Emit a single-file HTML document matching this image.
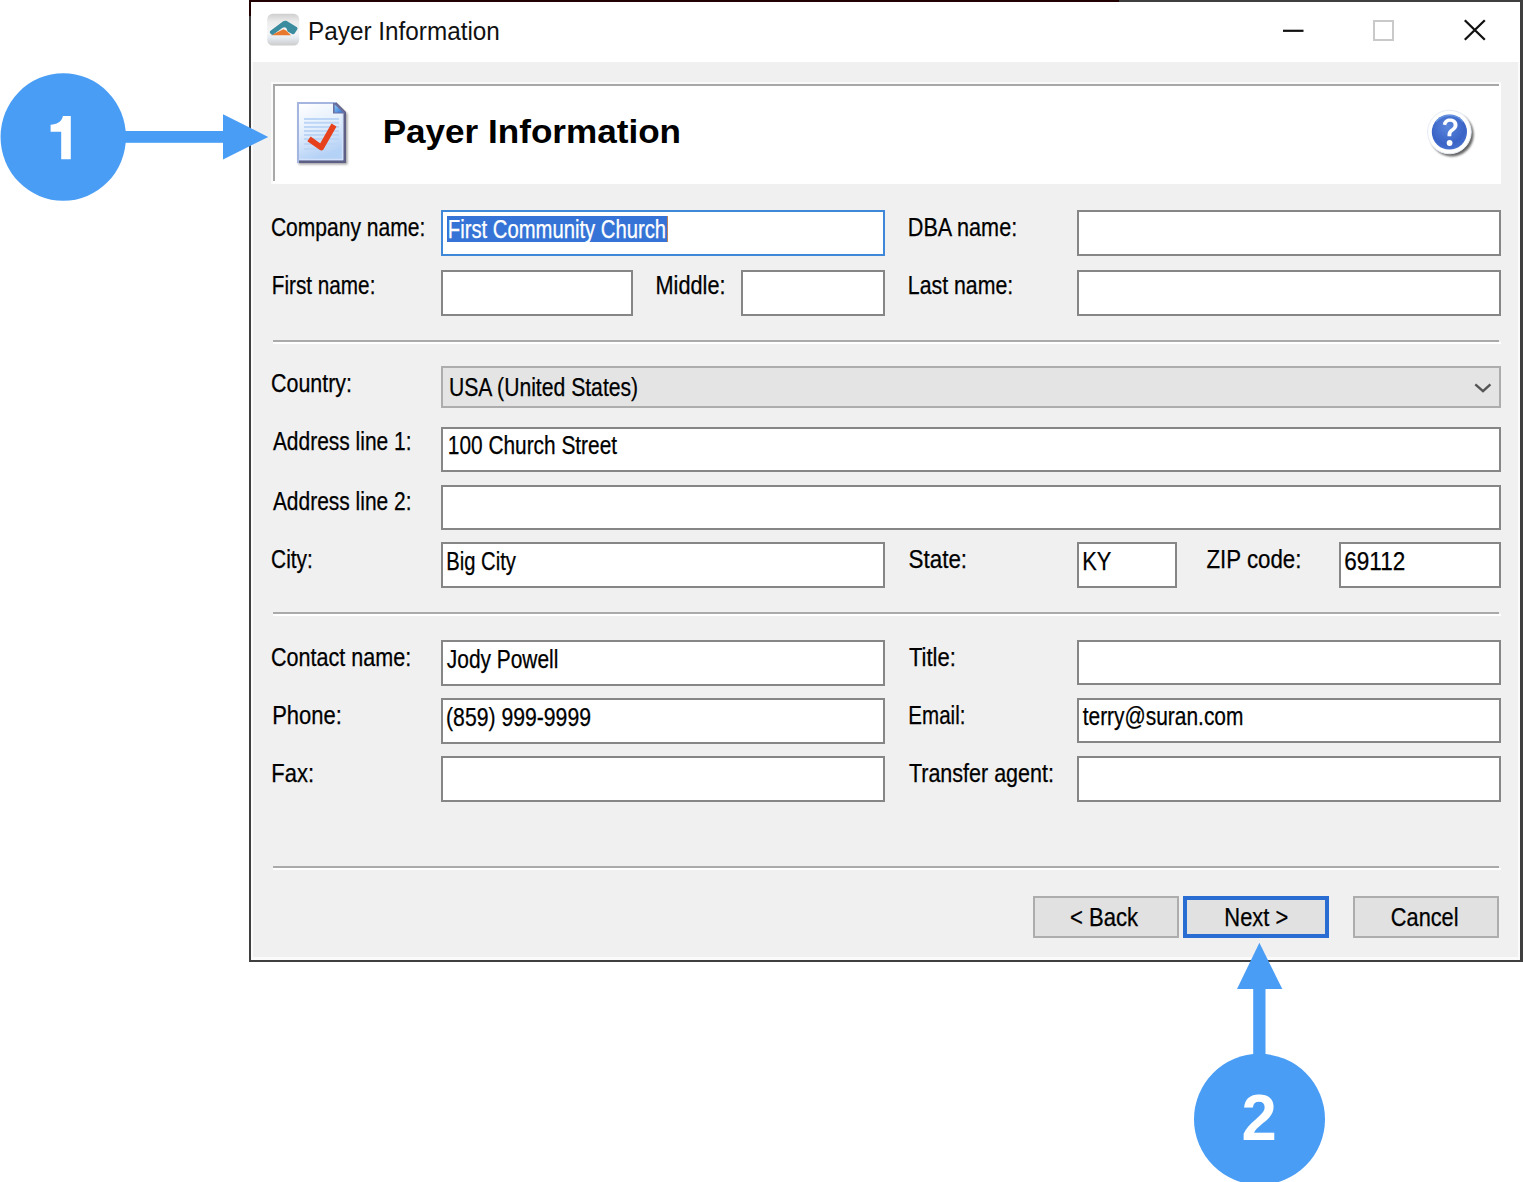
<!DOCTYPE html>
<html><head><meta charset="utf-8">
<style>
html,body{margin:0;padding:0;}
body{width:1523px;height:1182px;background:#fff;position:relative;overflow:hidden;font-family:"Liberation Sans",sans-serif;}
.a{position:absolute;box-sizing:border-box;}
.tb{position:absolute;box-sizing:border-box;background:#fff;border:2px solid #868686;}
.cb{position:absolute;box-sizing:border-box;background:#e4e4e4;border:2px solid #adadad;}
.bt{position:absolute;box-sizing:border-box;background:#e1e1e1;border:2px solid #adadad;}
.sep{position:absolute;left:273px;width:1226px;height:2px;background:#aaaaaa;}
.sepw{position:absolute;left:273px;width:1228px;height:2px;background:#fff;}
svg.ov{position:absolute;left:0;top:0;}
svg text{font-family:"Liberation Sans",sans-serif;}
</style></head>
<body>
<!-- window frame -->
<div class="a" style="left:249px;top:0;width:1274px;height:962px;background:#3f3f3f;"></div>
<div class="a" style="left:249px;top:0;width:870px;height:2px;background:#200000;"></div>
<div class="a" style="left:249px;top:0;width:2px;height:16px;background:#200000;"></div>
<div class="a" style="left:251px;top:2px;width:1269px;height:958px;background:#fbfbfb;"></div>
<div class="a" style="left:253px;top:2px;width:1265px;height:955px;background:#f0f0f0;"></div>
<!-- title bar -->
<div class="a" style="left:251px;top:2px;width:1269px;height:60px;background:#fff;"></div>

<!-- header panel -->
<div class="a" style="left:271px;top:82px;width:1230px;height:102px;background:#fafafa;"></div>
<div class="a" style="left:273px;top:84px;width:1228px;height:100px;background:#fff;"></div>
<div class="a" style="left:273px;top:84px;width:1226px;height:2px;background:#a8a8a8;"></div>
<div class="a" style="left:273px;top:84px;width:2px;height:97px;background:#a8a8a8;"></div>

<!-- text boxes -->
<div class="tb" style="left:441px;top:210px;width:444px;height:46px;border-color:#3f87d8;"></div>
<div class="a" style="left:447px;top:216px;width:221px;height:26px;background:#3574d6;"></div>
<div class="a" style="left:667px;top:216px;width:1px;height:26px;background:#e0883c;opacity:0.8;"></div>
<div class="tb" style="left:1077px;top:210px;width:424px;height:46px;"></div>
<div class="tb" style="left:441px;top:270px;width:192px;height:46px;"></div>
<div class="tb" style="left:741px;top:270px;width:144px;height:46px;"></div>
<div class="tb" style="left:1077px;top:270px;width:424px;height:46px;"></div>

<div class="sep" style="top:340px;"></div><div class="sepw" style="top:342px;"></div>

<div class="cb" style="left:441px;top:366px;width:1060px;height:42px;"></div>
<div class="tb" style="left:441px;top:427px;width:1060px;height:45px;"></div>
<div class="tb" style="left:441px;top:485px;width:1060px;height:45px;"></div>
<div class="tb" style="left:441px;top:542px;width:444px;height:46px;"></div>
<div class="tb" style="left:1077px;top:542px;width:100px;height:46px;"></div>
<div class="tb" style="left:1339px;top:542px;width:162px;height:46px;"></div>

<div class="sep" style="top:612px;"></div><div class="sepw" style="top:614px;"></div>

<div class="tb" style="left:441px;top:640px;width:444px;height:46px;"></div>
<div class="tb" style="left:1077px;top:640px;width:424px;height:45px;"></div>
<div class="tb" style="left:441px;top:698px;width:444px;height:46px;"></div>
<div class="tb" style="left:1077px;top:698px;width:424px;height:45px;"></div>
<div class="tb" style="left:441px;top:756px;width:444px;height:46px;"></div>
<div class="tb" style="left:1077px;top:756px;width:424px;height:46px;"></div>

<div class="sep" style="top:866px;"></div><div class="sepw" style="top:868px;"></div>

<!-- buttons -->
<div class="bt" style="left:1033px;top:896px;width:146px;height:42px;"></div>
<div class="bt" style="left:1183px;top:896px;width:146px;height:42px;border:4px solid #2a6dd2;"></div>
<div class="bt" style="left:1353px;top:896px;width:146px;height:42px;"></div>

<svg class="ov" width="1523" height="1182" viewBox="0 0 1523 1182">
<!-- annotations -->
<ellipse cx="63.25" cy="137" rx="62.7" ry="63.8" fill="#499df5"/>
<rect x="118" y="131" width="106" height="11.8" fill="#499df5"/>
<polygon points="223,114.2 268.2,137 223,159.6" fill="#499df5"/>
<path d="M62.9,116.1 L70.8,116.1 L70.8,159.3 L61.2,159.3 L61.2,131.7 L50.6,131.7 L50.6,124.7 C56.5,124.5 61.6,122.3 62.9,116.1 Z" fill="#fff"/>
<circle cx="1259.5" cy="1119.3" r="65.5" fill="#499df5"/>
<rect x="1253.2" y="985" width="12.3" height="80" fill="#499df5"/>
<polygon points="1237,989 1259.4,942.8 1282.3,989" fill="#499df5"/>
<!-- title icon -->
<defs>
<linearGradient id="gi" x1="0" y1="0" x2="0" y2="1">
<stop offset="0" stop-color="#cfcfcf"/><stop offset="0.25" stop-color="#ececec"/><stop offset="0.6" stop-color="#f6f6f6"/><stop offset="0.75" stop-color="#e6ecf2"/><stop offset="1" stop-color="#cbcbcb"/>
</linearGradient>
<linearGradient id="gd" x1="0" y1="0" x2="0.3" y2="1">
<stop offset="0" stop-color="#ffffff"/><stop offset="0.5" stop-color="#e3eefc"/><stop offset="1" stop-color="#b4d1f6"/>
</linearGradient>
<radialGradient id="gh" cx="0.45" cy="0.35" r="0.7">
<stop offset="0" stop-color="#5b86dc"/><stop offset="0.7" stop-color="#3a63c6"/><stop offset="1" stop-color="#4a74d0"/>
</radialGradient>
<linearGradient id="gf" x1="0" y1="0" x2="1" y2="1"><stop offset="0" stop-color="#86ccfa"/><stop offset="1" stop-color="#3a70cf"/></linearGradient>
<filter id="bl" x="-20%" y="-20%" width="140%" height="140%"><feGaussianBlur stdDeviation="0.6"/></filter>
<filter id="bl2" x="-20%" y="-20%" width="140%" height="140%"><feGaussianBlur stdDeviation="1.0"/></filter>
</defs>
<rect x="267.2" y="13.8" width="32" height="31.7" rx="5.5" fill="url(#gi)" filter="url(#bl)"/>
<g filter="url(#bl)">
<path d="M271,35.2 L283.5,29.2 L286,30.5 L291,35.2 Z" fill="#e8782f"/>
<path d="M269.8,32.6 C269.6,31.5 270.3,30.9 271.2,30.2 L283.2,21.3 C284.3,20.5 285.6,20.4 286.8,21.1 L296.6,27 C297.6,27.6 297.8,28.6 297.2,29.6 L294.8,33.3 C294.1,34.2 293,34.4 292.1,33.9 L287.5,31.5 C287.2,29.5 286.5,27.5 284.8,27.3 C283.4,27.2 282,28.2 281,29 L273.2,34.5 C272,35.3 270.3,34.2 269.8,32.6 Z" fill="#3a8c9e"/>
</g>
<!-- document icon -->
<path d="M298.5,104 L337,104 L347.5,114 L347.5,164.5 L298.5,164.5 Z" fill="#555" opacity="0.55" filter="url(#bl2)"/>
<g filter="url(#bl)">
<path d="M297,102 L336,102 L346,112 L346,163 L297,163 Z" fill="#5d5f86"/>
<path d="M297,102 L336,102 L336,104 L299,104 L299,163 L297,163 Z" fill="#a4b5e0"/>
<path d="M299,104 L335.2,104 L343.3,112.3 L343.3,160.3 L299,160.3 Z" fill="url(#gd)"/>
<path d="M341.8,112 L343.3,112 L343.3,160.3 L299,160.3 L299,158.8 L341.8,158.8 Z" fill="#d2e2fa"/>
<path d="M333,103 L336,103 L345,112.5 L345,113.5 L333,113.5 Z" fill="#6c70a0"/>
<path d="M334.6,104.5 L343,112.4 L334.6,112.4 Z" fill="url(#gf)"/>
<g stroke="#bdd6f6" stroke-width="2">
<line x1="304" y1="118.9" x2="339" y2="118.9"/><line x1="304" y1="122.7" x2="339" y2="122.7"/>
<line x1="304" y1="126.9" x2="339" y2="126.9"/><line x1="304" y1="131" x2="339" y2="131"/>
<line x1="304" y1="135" x2="339" y2="135"/><line x1="304" y1="139.1" x2="339" y2="139.1"/>
<line x1="304" y1="144" x2="339" y2="144"/><line x1="304" y1="149" x2="333" y2="149"/>
</g>
<polyline points="309,138.8 321.2,147.5 334,125" fill="none" stroke="#e6411e" stroke-width="5.8" stroke-linejoin="round"/>
</g>
<!-- help icon -->
<circle cx="1451.8" cy="134.6" r="21.8" fill="#4a4a4a" opacity="0.85" filter="url(#bl2)"/>
<circle cx="1449.4" cy="132" r="21.8" fill="#fff"/>
<circle cx="1449.4" cy="132" r="21.8" fill="none" stroke="#e6ebf5" stroke-width="1"/>
<circle cx="1449.4" cy="132" r="17.6" fill="url(#gh)"/>
<path d="M1436,122 A17.2,17.2 0 0 1 1463,122" fill="none" stroke="#8fc8ff" stroke-width="1.2" opacity="0.45" filter="url(#bl)"/>
<path d="M1442.8,124.6 C1443.5,120.5 1446.5,118.6 1450,118.6 C1454.5,118.6 1457.5,121.3 1457.5,125 C1457.5,128.5 1455,130 1452.8,131.8 C1451.5,132.9 1451.3,134 1451.3,136.2 L1447.5,136.2 C1447.4,133.2 1447.9,131.2 1450.2,129.3 C1452.5,127.5 1453.6,126.6 1453.6,124.9 C1453.6,123 1452.3,121.8 1450,121.8 C1447.8,121.8 1446.6,123.2 1446.3,125.3 Z" fill="#fff"/>
<circle cx="1449.6" cy="143" r="2.9" fill="#fff"/>
<!-- window controls -->
<rect x="1283" y="29.7" width="20.5" height="2.2" fill="#111"/>
<rect x="1374" y="21" width="19" height="19" fill="none" stroke="#c9c9c9" stroke-width="2"/>
<path d="M1464.8,20.2 L1484.8,39.8 M1484.8,20.2 L1464.8,39.8" stroke="#111" stroke-width="2.3"/>
<!-- combo chevron -->
<polyline points="1475.3,384.3 1483,391.2 1490.4,384.3" fill="none" stroke="#555" stroke-width="2.4"/>
<text x="270.90" y="236.00" font-size="25" font-weight="400" fill="#000" stroke="#000" stroke-width="0.25" textLength="154.49" lengthAdjust="spacingAndGlyphs">Company name:</text>
<text x="271.74" y="294.20" font-size="25" font-weight="400" fill="#000" stroke="#000" stroke-width="0.25" textLength="103.67" lengthAdjust="spacingAndGlyphs">First name:</text>
<text x="655.56" y="293.80" font-size="25" font-weight="400" fill="#000" stroke="#000" stroke-width="0.25" textLength="69.92" lengthAdjust="spacingAndGlyphs">Middle:</text>
<text x="907.79" y="236.30" font-size="25" font-weight="400" fill="#000" stroke="#000" stroke-width="0.25" textLength="109.38" lengthAdjust="spacingAndGlyphs">DBA name:</text>
<text x="907.80" y="294.00" font-size="25" font-weight="400" fill="#000" stroke="#000" stroke-width="0.25" textLength="105.36" lengthAdjust="spacingAndGlyphs">Last name:</text>
<text x="271.06" y="391.60" font-size="25" font-weight="400" fill="#000" stroke="#000" stroke-width="0.25" textLength="80.93" lengthAdjust="spacingAndGlyphs">Country:</text>
<text x="272.90" y="449.70" font-size="25" font-weight="400" fill="#000" stroke="#000" stroke-width="0.25" textLength="138.63" lengthAdjust="spacingAndGlyphs">Address line 1:</text>
<text x="272.90" y="509.70" font-size="25" font-weight="400" fill="#000" stroke="#000" stroke-width="0.25" textLength="138.63" lengthAdjust="spacingAndGlyphs">Address line 2:</text>
<text x="271.08" y="567.60" font-size="25" font-weight="400" fill="#000" stroke="#000" stroke-width="0.25" textLength="41.76" lengthAdjust="spacingAndGlyphs">City:</text>
<text x="908.61" y="567.60" font-size="25" font-weight="400" fill="#000" stroke="#000" stroke-width="0.25" textLength="58.46" lengthAdjust="spacingAndGlyphs">State:</text>
<text x="1206.50" y="568.10" font-size="25" font-weight="400" fill="#000" stroke="#000" stroke-width="0.25" textLength="94.93" lengthAdjust="spacingAndGlyphs">ZIP code:</text>
<text x="271.06" y="665.60" font-size="25" font-weight="400" fill="#000" stroke="#000" stroke-width="0.25" textLength="140.14" lengthAdjust="spacingAndGlyphs">Contact name:</text>
<text x="908.90" y="666.00" font-size="25" font-weight="400" fill="#000" stroke="#000" stroke-width="0.25" textLength="46.91" lengthAdjust="spacingAndGlyphs">Title:</text>
<text x="272.14" y="724.00" font-size="25" font-weight="400" fill="#000" stroke="#000" stroke-width="0.25" textLength="69.67" lengthAdjust="spacingAndGlyphs">Phone:</text>
<text x="908.36" y="723.90" font-size="25" font-weight="400" fill="#000" stroke="#000" stroke-width="0.25" textLength="57.04" lengthAdjust="spacingAndGlyphs">Email:</text>
<text x="271.34" y="781.80" font-size="25" font-weight="400" fill="#000" stroke="#000" stroke-width="0.25" textLength="42.67" lengthAdjust="spacingAndGlyphs">Fax:</text>
<text x="908.90" y="782.10" font-size="25" font-weight="400" fill="#000" stroke="#000" stroke-width="0.25" textLength="145.07" lengthAdjust="spacingAndGlyphs">Transfer agent:</text>
<text x="447.78" y="237.70" font-size="25" font-weight="400" fill="#fff" stroke="#fff" stroke-width="0.25" textLength="218.35" lengthAdjust="spacingAndGlyphs">First Community Church</text>
<text x="448.90" y="395.60" font-size="25" font-weight="400" fill="#000" stroke="#000" stroke-width="0.25" textLength="189.26" lengthAdjust="spacingAndGlyphs">USA (United States)</text>
<text x="447.87" y="454.00" font-size="25" font-weight="400" fill="#000" stroke="#000" stroke-width="0.25" textLength="169.19" lengthAdjust="spacingAndGlyphs">100 Church Street</text>
<text x="446.28" y="569.70" font-size="25" font-weight="400" fill="#000" stroke="#000" stroke-width="0.25" textLength="69.62" lengthAdjust="spacingAndGlyphs">Big City</text>
<text x="1082.16" y="569.70" font-size="25" font-weight="400" fill="#000" stroke="#000" stroke-width="0.25" textLength="29.09" lengthAdjust="spacingAndGlyphs">KY</text>
<text x="1344.30" y="570.30" font-size="25" font-weight="400" fill="#000" stroke="#000" stroke-width="0.25" textLength="61.02" lengthAdjust="spacingAndGlyphs">69112</text>
<text x="446.80" y="667.70" font-size="25" font-weight="400" fill="#000" stroke="#000" stroke-width="0.25" textLength="111.60" lengthAdjust="spacingAndGlyphs">Jody Powell</text>
<text x="446.07" y="725.70" font-size="25" font-weight="400" fill="#000" stroke="#000" stroke-width="0.25" textLength="144.91" lengthAdjust="spacingAndGlyphs">(859) 999-9999</text>
<text x="1082.70" y="725.40" font-size="25" font-weight="400" fill="#000" stroke="#000" stroke-width="0.25" textLength="160.70" lengthAdjust="spacingAndGlyphs">terry@suran.com</text>
<text x="1069.92" y="926.20" font-size="25" font-weight="400" fill="#000" stroke="#000" stroke-width="0.25" textLength="68.05" lengthAdjust="spacingAndGlyphs">&lt; Back</text>
<text x="1224.33" y="926.10" font-size="25" font-weight="400" fill="#000" stroke="#000" stroke-width="0.25" textLength="63.90" lengthAdjust="spacingAndGlyphs">Next &gt;</text>
<text x="1390.83" y="926.30" font-size="25" font-weight="400" fill="#000" stroke="#000" stroke-width="0.25" textLength="67.72" lengthAdjust="spacingAndGlyphs">Cancel</text>
<text x="308.06" y="39.60" font-size="25" font-weight="400" fill="#111" textLength="191.83" lengthAdjust="spacingAndGlyphs">Payer Information</text>
<text x="382.67" y="143.00" font-size="33" font-weight="700" fill="#000" textLength="298.36" lengthAdjust="spacingAndGlyphs">Payer Information</text>
<text x="1241.62" y="1140.00" font-size="64" font-weight="700" fill="#fff" textLength="35.26" lengthAdjust="spacingAndGlyphs">2</text>
</svg>
</body></html>
